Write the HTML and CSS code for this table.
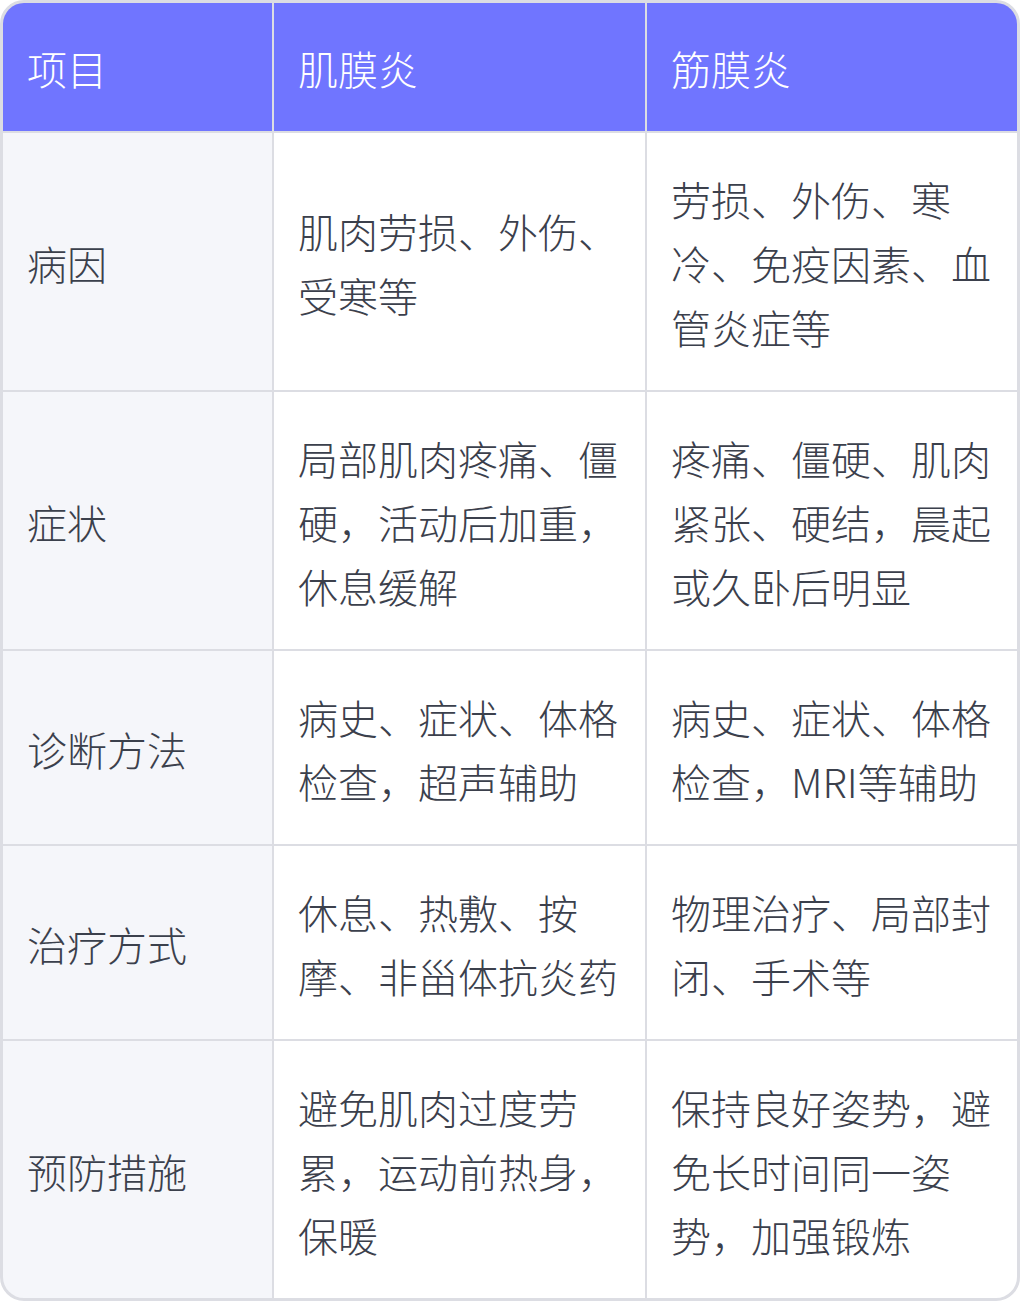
FILE: index.html
```html
<!DOCTYPE html>
<html lang="zh-CN">
<head>
<meta charset="utf-8">
<title>肌膜炎与筋膜炎对比</title>
<link rel="stylesheet" href="styles.css">
</head>
<body>
<div class="table">
  <div class="cell head">项目</div>
  <div class="cell head">肌膜炎</div>
  <div class="cell head">筋膜炎</div>

  <div class="cell label">病因</div>
  <div class="cell">肌肉劳损、外伤、受寒等</div>
  <div class="cell">劳损、外伤、寒冷、免疫因素、血管炎症等</div>

  <div class="cell label">症状</div>
  <div class="cell">局部肌肉疼痛、僵硬，活动后加重，休息缓解</div>
  <div class="cell">疼痛、僵硬、肌肉紧张、硬结，晨起或久卧后明显</div>

  <div class="cell label">诊断方法</div>
  <div class="cell">病史、症状、体格检查，超声辅助</div>
  <div class="cell">病史、症状、体格检查，MRI等辅助</div>

  <div class="cell label">治疗方式</div>
  <div class="cell">休息、热敷、按摩、非甾体抗炎药</div>
  <div class="cell">物理治疗、局部封闭、手术等</div>

  <div class="cell label">预防措施</div>
  <div class="cell">避免肌肉过度劳累，运动前热身，保暖</div>
  <div class="cell">保持良好姿势，避免长时间同一姿势，加强锻炼</div>
</div>
</body>
</html>
```

FILE: styles.css
```css
html, body {
  margin: 0;
  padding: 0;
  background: #ffffff;
}

.table {
  width: 1020px;
  box-sizing: border-box;
  border: 3px solid #dcdde3;
  border-radius: 24px;
  overflow: hidden;
  display: grid;
  grid-template-columns: 269px 371px 1fr;
  gap: 2px;
  background: #dcdde3;
  font-family: "Noto Sans CJK SC", "Noto Sans", sans-serif;
  font-size: 40px;
  font-weight: 300;
  line-height: 64px;
  color: #3b404c;
}

.cell {
  background: #ffffff;
  padding: 33.5px 24px 31.5px;
  display: flex;
  align-items: center;
}

.head {
  background: #7075ff;
  color: #ffffff;
  padding-top: 33px;
  padding-bottom: 31px;
}

.label {
  background: #f5f6fa;
}
```
